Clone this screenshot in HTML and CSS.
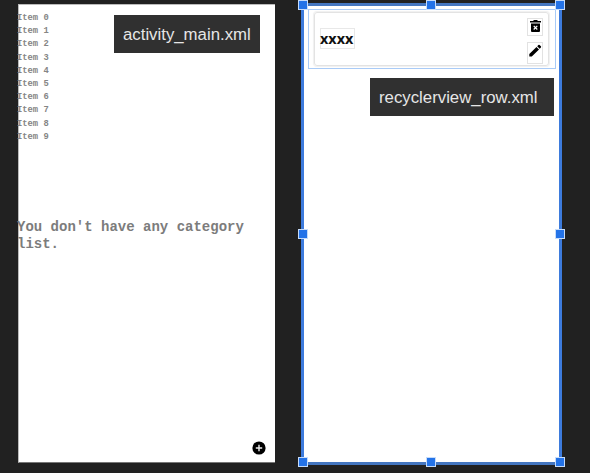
FILE: index.html
```html
<!DOCTYPE html>
<html lang="en">
<head>
<meta charset="utf-8">
<title>Layouts</title>
<link rel="stylesheet" href="styles.css">
</head>
<body>
<main class="editor">
  <section class="phone">
    <ul class="items">
      <li>Item 0</li><li>Item 1</li><li>Item 2</li><li>Item 3</li><li>Item 4</li>
      <li>Item 5</li><li>Item 6</li><li>Item 7</li><li>Item 8</li><li>Item 9</li>
    </ul>
    <p class="empty">You don't have any category list.</p>
    <svg class="add" viewBox="0 0 14 14"><circle cx="7" cy="7" r="6.6"/><path d="M7 3.8v6.4M3.8 7h6.4" stroke="#eee" stroke-width="1.4"/></svg>
    <div class="tag tag-main">activity_main.xml</div>
  </section>
  <section class="phone selected">
    <div class="row">
      <div class="card">
        <span class="name">xxxx</span>
        <div class="actions">
          <span class="action"><svg viewBox="0 0 14 16"><path d="M2 2h3l1-1h3l1 1h3v1.5H2zM3 4.5h9V12q0 1-1 1H4q-1 0-1-1z"/><path d="M5.7 6.9l3.6 3.6M9.3 6.9l-3.6 3.6" stroke="#fff" stroke-width="1.2"/></svg></span>
          <span class="action action-edit"><svg viewBox="0 0 14 16"><path d="M1.3 13.6v-2.5l7.2-7.2L11 6.4l-7.2 7.2zM9.2 3.2l1.2-1.2q.6-.5 1.2 0l1.3 1.3q.5.6 0 1.2l-1.2 1.2z"/></svg></span>
        </div>
      </div>
    </div>
    <div class="tag tag-row">recyclerview_row.xml</div>
    <i class="handle left top"></i><i class="handle center top"></i><i class="handle right top"></i>
    <i class="handle left middle"></i><i class="handle right middle"></i>
    <i class="handle left bottom"></i><i class="handle center bottom"></i><i class="handle right bottom"></i>
  </section>
</main>
</body>
</html>
```
FILE: styles.css
```css
* { box-sizing: border-box; }
body { margin: 0; background: #212121; overflow: hidden; font-family: "Liberation Sans", Arial, sans-serif; }
.editor { display: flex; align-items: flex-start; height: 473px; padding: 3px 0 0 18px; }
.phone { position: relative; width: 257px; height: 459px; margin-top: 1px; background: #fff; border: 1px solid #bbb; border-width: 1px 0 1px 1px; border-bottom-color: #777; }
.items { list-style: none; margin: 0; padding: 7px 0 0; margin-left: -2px; font: bold 8.8px/13.2px "Liberation Mono", monospace; color: #858585; }
.empty { margin: 75px 0 0 -2px; font: bold 14px/17px "Liberation Mono", monospace; color: #7c7c7c; }
.add { position: absolute; right: 9px; bottom: 7px; width: 14px; height: 14px; }
.tag { position: absolute; height: 38px; padding-left: 9px; background: #303030; color: #e6e6e6; font-size: 16.8px; line-height: 40px; white-space: nowrap; }
.tag-main { left: 95px; top: 10px; width: 146px; }
.selected { width: 261px; height: 462px; margin: 0 0 0 26px; padding: 3px 4px 0; border: 3px solid #3d7bdc; border-top-color: #4476c0; border-bottom-color: #4476c0; }
.row { width: 248px; height: 60px; padding: 3px 5px 3px 5px; border: 1px solid #a9cbf7; }
.card { display: flex; justify-content: space-between; width: 235px; height: 54px; margin-top: -1px; padding: 5px 5px 0 5px; border: 1px solid #e3e3e3; border-radius: 3px; box-shadow: 0 0 1px 1px #f0f0f0; }
.name { width: 35px; height: 21px; margin-top: 10px; border: 1px solid #e8e8e8; font: bold 14.4px/19px "Open Sans", sans-serif; text-indent: -1px; color: #111; }
.actions { display: flex; flex-direction: column; gap: 6px; }
.action { display: block; width: 16px; height: 18px; border: 1px solid #e2e2e2; }
.action-edit { height: 22px; }
.action svg { display: block; width: 14px; height: 16px; }
.tag-row { left: 66px; top: 72px; width: 184px; }
.handle { position: absolute; width: 10px; height: 10px; background: #2473e8; border: 1px solid #c6dcfa; }
.left { left: -6px; }
.center { left: 122px; }
.right { right: -6px; }
.top { top: -6px; }
.middle { top: 223px; }
.bottom { bottom: -5px; }
```
